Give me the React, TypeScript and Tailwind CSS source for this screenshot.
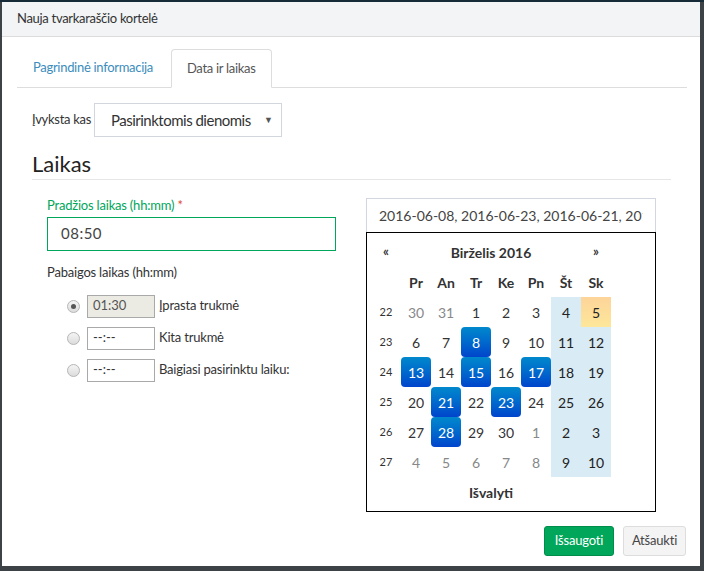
import React from 'react';

const font = { fontFamily: 'Lato, "Liberation Sans", Arial, sans-serif' };

type Cell = { d: number; muted?: boolean; active?: boolean; today?: boolean };

const weeks: { wk: number; days: Cell[] }[] = [
  { wk: 22, days: [{ d: 30, muted: true }, { d: 31, muted: true }, { d: 1 }, { d: 2 }, { d: 3 }, { d: 4 }, { d: 5, today: true }] },
  { wk: 23, days: [{ d: 6 }, { d: 7 }, { d: 8, active: true }, { d: 9 }, { d: 10 }, { d: 11 }, { d: 12 }] },
  { wk: 24, days: [{ d: 13, active: true }, { d: 14 }, { d: 15, active: true }, { d: 16 }, { d: 17, active: true }, { d: 18 }, { d: 19 }] },
  { wk: 25, days: [{ d: 20 }, { d: 21, active: true }, { d: 22 }, { d: 23, active: true }, { d: 24 }, { d: 25 }, { d: 26 }] },
  { wk: 26, days: [{ d: 27 }, { d: 28, active: true }, { d: 29 }, { d: 30 }, { d: 1, muted: true }, { d: 2 }, { d: 3 }] },
  { wk: 27, days: [{ d: 4, muted: true }, { d: 5, muted: true }, { d: 6, muted: true }, { d: 7, muted: true }, { d: 8, muted: true }, { d: 9 }, { d: 10 }] },
];

const dow = ['Pr', 'An', 'Tr', 'Ke', 'Pn', 'Št', 'Sk'];

function DayCell({ c, col }: { c: Cell; col: number }) {
  const weekend = col >= 5;
  let cls = 'w-[30px] h-[30px] flex items-center justify-center text-[14px] ';
  if (c.active) {
    cls += 'rounded-[4px] bg-gradient-to-b from-[#0088cc] to-[#0044cc] text-white';
  } else if (c.today) {
    cls += 'bg-gradient-to-b from-[#fdd49a] to-[#fde79a] text-[#222]';
  } else if (weekend) {
    cls += 'bg-[#d9ebf5] text-[#222]';
  } else if (c.muted) {
    cls += 'text-[#888]';
  } else {
    cls += 'text-[#333]';
  }
  return <div className={cls}>{c.d}</div>;
}

function Calendar() {
  return (
    <div className="border border-black p-[4px] h-[280px]">
      <div className="flex text-[#333]">
        <div className="w-[30px] h-[30px] flex items-center justify-center text-[13px] font-bold">«</div>
        <div className="w-[180px] h-[30px] flex items-center justify-center text-[14px] font-bold">Birželis 2016</div>
        <div className="w-[30px] h-[30px] flex items-center justify-center text-[13px] font-bold">»</div>
      </div>
      <div className="flex text-[#333]">
        <div className="w-[30px] h-[30px]" />
        {dow.map((d) => (
          <div key={d} className="w-[30px] h-[30px] flex items-center justify-center text-[14px] font-bold">{d}</div>
        ))}
      </div>
      {weeks.map((w) => (
        <div key={w.wk} className="flex">
          <div className="w-[30px] h-[30px] flex items-center justify-center text-[11px] text-[#333]">{w.wk}</div>
          {w.days.map((c, i) => (
            <DayCell key={i} c={c} col={i} />
          ))}
        </div>
      ))}
      <div className="flex">
        <div className="w-[240px] h-[30px] flex items-center justify-center text-[14px] font-bold text-[#333]">Išvalyti</div>
      </div>
    </div>
  );
}

function Radio({ checked }: { checked?: boolean }) {
  return (
    <div className="w-[13px] h-[13px] rounded-full border border-[#b5b5b5] bg-gradient-to-b from-[#f4f4f4] to-[#dcdcdc] flex items-center justify-center">
      {checked && <div className="w-[5px] h-[5px] rounded-full bg-[#555]" />}
    </div>
  );
}

function DurationRow({ value, label, checked, disabled }: { value: string; label: string; checked?: boolean; disabled?: boolean }) {
  return (
    <div className="flex items-center h-[32px]">
      <div className="w-[40px] flex justify-end pr-[7px]">
        <Radio checked={checked} />
      </div>
      <div
        className={`w-[68px] h-[23px] border border-[#a9a9a9] flex items-center px-[5px] text-[13px] ${
          disabled ? 'bg-[#ebebe4] text-[#545454]' : 'bg-white text-[#333]'
        }`}
      >
        {value}
      </div>
      <span className="ml-[4px] text-[13px] text-[#333] tracking-[-0.2px]">{label}</span>
    </div>
  );
}

export default function App() {
  return (
    <div className="w-[704px] h-[571px] bg-[#3d4246] pt-[2px] pl-[2px] pr-[4px] pb-[3px] border-t-2 border-[#172a38]" style={font}>
      <div className="bg-white h-full flex flex-col -mt-[2px]">
        {/* header */}
        <div className="h-[35px] bg-[#f2f4f5] border-b border-[#dcdcdc] flex items-center pl-[15px] text-[13px] text-[#333] tracking-[-0.3px]">
          Nauja tvarkaraščio kortelė
        </div>

        <div className="flex-1 pl-[15px] pr-[13px] pt-[12px]">
          {/* tabs */}
          <div className="flex border-b border-[#dddddd] h-[39px] tracking-[-0.3px]">
            <div className="px-[16px] flex items-center text-[13px] text-[#3c8dbc]">Pagrindinė informacija</div>
            <div className="ml-[2px] px-[15px] flex items-center text-[13px] text-[#555] border border-[#dddddd] border-b-white -mb-px rounded-t-[4px] bg-white">
              Data ir laikas
            </div>
          </div>

          <div className="pl-[15px] pr-[16px]">
            <div className="flex items-center mt-[15px]">
              <span className="text-[13px] text-[#333] mr-[3px] tracking-[-0.3px]">Įvyksta kas</span>
              <div className="w-[188px] h-[34px] border border-[#d2d6de] flex items-center pl-[16px] pr-[8px] justify-between">
                <span className="text-[15px] text-[#333] tracking-[-0.5px]">Pasirinktomis dienomis</span>
                <span className="text-[9px] text-[#555]">▼</span>
              </div>
            </div>

            <div className="mt-[14px] pb-[2px] border-b border-[#e6e6e6] text-[22px] text-[#222] leading-[26px]">Laikas</div>

            <div className="flex mt-[15px]">
              {/* left column */}
              <div className="w-[320px] px-[15px]">
                <div className="text-[13px] text-[#00a65a] mt-[1px] tracking-[-0.2px]">
                  Pradžios laikas (hh:mm) <span className="text-[#dd4b39]">*</span>
                </div>
                <div className="mt-[1px] h-[34px] border border-[#00a65a] flex items-center pl-[13px] text-[15px] text-[#444] tracking-[0.5px]">
                  08:50
                </div>
                <div className="mt-[12px] text-[13px] text-[#333] tracking-[-0.2px]">Pabaigos laikas (hh:mm)</div>
                <div className="mt-[8px]">
                  <DurationRow value="01:30" label="Įprasta trukmė" checked disabled />
                  <DurationRow value="--:--" label="Kita trukmė" />
                  <DurationRow value="--:--" label="Baigiasi pasirinktu laiku:" />
                </div>
              </div>

              {/* right column */}
              <div className="w-[320px] px-[15px] mt-[3px]">
                <div className="h-[34px] border border-[#d2d6de] border-b-0 flex items-center pl-[12px] pr-[12px] text-[14px] text-[#444]">
                  <div className="overflow-hidden whitespace-nowrap">2016-06-08, 2016-06-23, 2016-06-21, 2016-06-13</div>
                </div>
                <Calendar />
              </div>
            </div>
          </div>
        </div>

        {/* footer */}
        <div className="flex justify-end gap-[9px] pr-[14px] pb-[10px]">
          <button className="h-[30px] w-[70px] rounded-[3px] bg-[#00a65a] border border-[#008d4c] text-white text-[13px] tracking-[-0.2px]">Išsaugoti</button>
          <button className="h-[30px] w-[63px] rounded-[3px] bg-[#f4f4f4] border border-[#dddddd] text-[#444] text-[13px] tracking-[-0.2px]">Atšaukti</button>
        </div>
      </div>
    </div>
  );
}
